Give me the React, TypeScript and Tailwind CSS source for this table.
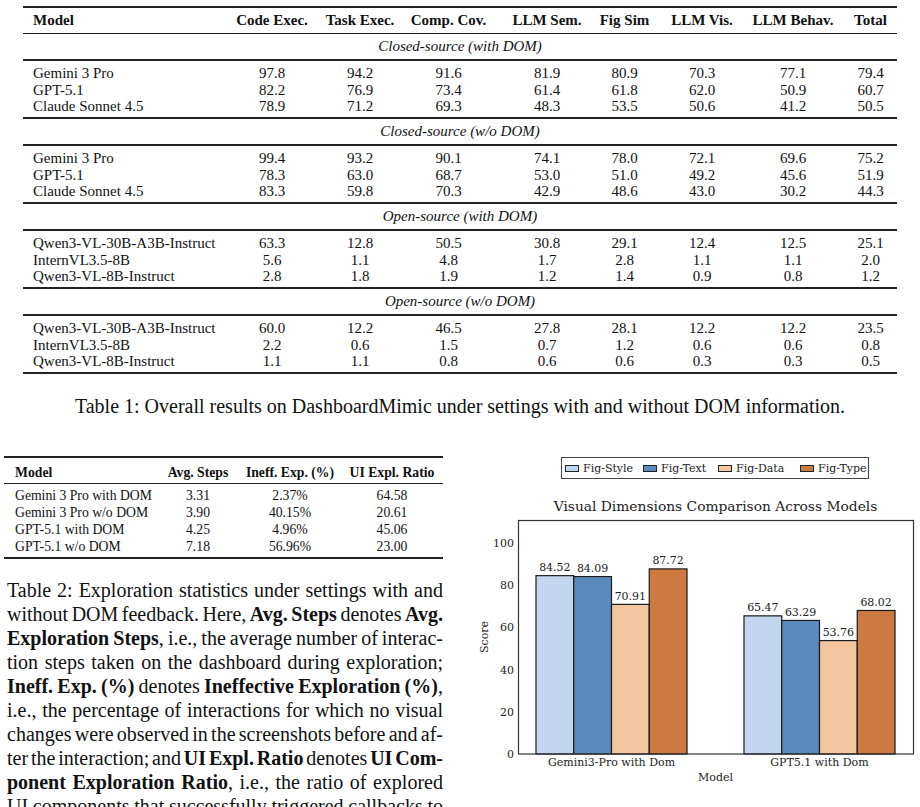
import React from "react";

type Row = { model: string; vals: string[] };
type Section = { label: string; rows: Row[] };

const T1_HEAD = ["Code Exec.", "Task Exec.", "Comp. Cov.", "LLM Sem.", "Fig Sim", "LLM Vis.", "LLM Behav.", "Total"];

const T1: Section[] = [
  {
    label: "Closed-source (with DOM)",
    rows: [
      { model: "Gemini 3 Pro", vals: ["97.8", "94.2", "91.6", "81.9", "80.9", "70.3", "77.1", "79.4"] },
      { model: "GPT-5.1", vals: ["82.2", "76.9", "73.4", "61.4", "61.8", "62.0", "50.9", "60.7"] },
      { model: "Claude Sonnet 4.5", vals: ["78.9", "71.2", "69.3", "48.3", "53.5", "50.6", "41.2", "50.5"] },
    ],
  },
  {
    label: "Closed-source (w/o DOM)",
    rows: [
      { model: "Gemini 3 Pro", vals: ["99.4", "93.2", "90.1", "74.1", "78.0", "72.1", "69.6", "75.2"] },
      { model: "GPT-5.1", vals: ["78.3", "63.0", "68.7", "53.0", "51.0", "49.2", "45.6", "51.9"] },
      { model: "Claude Sonnet 4.5", vals: ["83.3", "59.8", "70.3", "42.9", "48.6", "43.0", "30.2", "44.3"] },
    ],
  },
  {
    label: "Open-source (with DOM)",
    rows: [
      { model: "Qwen3-VL-30B-A3B-Instruct", vals: ["63.3", "12.8", "50.5", "30.8", "29.1", "12.4", "12.5", "25.1"] },
      { model: "InternVL3.5-8B", vals: ["5.6", "1.1", "4.8", "1.7", "2.8", "1.1", "1.1", "2.0"] },
      { model: "Qwen3-VL-8B-Instruct", vals: ["2.8", "1.8", "1.9", "1.2", "1.4", "0.9", "0.8", "1.2"] },
    ],
  },
  {
    label: "Open-source (w/o DOM)",
    rows: [
      { model: "Qwen3-VL-30B-A3B-Instruct", vals: ["60.0", "12.2", "46.5", "27.8", "28.1", "12.2", "12.2", "23.5"] },
      { model: "InternVL3.5-8B", vals: ["2.2", "0.6", "1.5", "0.7", "1.2", "0.6", "0.6", "0.8"] },
      { model: "Qwen3-VL-8B-Instruct", vals: ["1.1", "1.1", "0.8", "0.6", "0.6", "0.3", "0.3", "0.5"] },
    ],
  },
];

const T2_HEAD = ["Avg. Steps", "Ineff. Exp. (%)", "UI Expl. Ratio"];
const T2: Row[] = [
  { model: "Gemini 3 Pro with DOM", vals: ["3.31", "2.37%", "64.58"] },
  { model: "Gemini 3 Pro w/o DOM", vals: ["3.90", "40.15%", "20.61"] },
  { model: "GPT-5.1 with DOM", vals: ["4.25", "4.96%", "45.06"] },
  { model: "GPT-5.1 w/o DOM", vals: ["7.18", "56.96%", "23.00"] },
];

// caption lines as set in the paper, **...** is bold
const CAPTION2 = [
  "Table 2: Exploration statistics under settings with and",
  "without DOM feedback. Here, **Avg. Steps** denotes **Avg.**",
  "**Exploration Steps**, i.e., the average number of interac-",
  "tion steps taken on the dashboard during exploration;",
  "**Ineff. Exp. (%)** denotes **Ineffective Exploration (%)**,",
  "i.e., the percentage of interactions for which no visual",
  "changes were observed in the screenshots before and af-",
  "ter the interaction; and **UI Expl. Ratio** denotes **UI Com-**",
  "**ponent Exploration Ratio**, i.e., the ratio of explored",
  "UI components that successfully triggered callbacks to",
];

const t1Grid = "grid grid-cols-[204px_90px_86px_91px_106px_49px_106px_76px_79px]";
const t2Grid = "grid grid-cols-[150px_88px_96px_108px]";

function parseLine(s: string) {
  let bold = false;
  return s.split(" ").map((w) =>
    w
      .split("**")
      .map((t, i) => {
        if (i > 0) bold = !bold;
        return { t, b: bold };
      })
      .filter((p) => p.t)
  );
}

function Table1() {
  return (
    <div className="ml-[23px] w-[874px] border-t-2 border-[#222] text-[15px] leading-[16.5px]">
      <div className={`${t1Grid} h-[26px] items-center border-b border-[#222] font-bold`}>
        <div className="pl-[10px]">Model</div>
        {T1_HEAD.map((h) => (
          <div key={h} className="flex justify-center whitespace-nowrap">{h}</div>
        ))}
      </div>
      {T1.map((s) => (
        <div key={s.label}>
          <div className="flex h-[27px] items-center justify-center border-b-2 border-[#222] italic">{s.label}</div>
          <div className="border-b-2 border-[#222] pt-[4px] pb-[2.5px]">
            {s.rows.map((r) => (
              <div key={r.model} className={t1Grid}>
                <div className="pl-[10px] whitespace-nowrap">{r.model}</div>
                {r.vals.map((v, i) => (
                  <div key={i} className="flex justify-center whitespace-nowrap">{v}</div>
                ))}
              </div>
            ))}
          </div>
        </div>
      ))}
    </div>
  );
}

function Table2() {
  return (
    <div className="ml-[4px] w-[439px] border-t-2 border-b-2 border-[#222] text-[13.7px] leading-[17px]">
      <div className={`${t2Grid} border-b border-[#222] pt-[6px] pb-[1.5px] font-bold`}>
        <div className="pl-[11px]">Model</div>
        {T2_HEAD.map((h) => (
          <div key={h} className="flex justify-center whitespace-nowrap">{h}</div>
        ))}
      </div>
      <div className="pt-[3px] pb-[1.5px] leading-[17.3px]">
        {T2.map((r) => (
          <div key={r.model} className={t2Grid}>
            <div className="pl-[11px] whitespace-nowrap">{r.model}</div>
            {r.vals.map((v, i) => (
              <div key={i} className="flex justify-center whitespace-nowrap">{v}</div>
            ))}
          </div>
        ))}
      </div>
    </div>
  );
}

function Caption2() {
  return (
    <div className="mt-[19px] ml-[7px] w-[436px] text-[20px] leading-[24px]">
      {CAPTION2.map((line, li) => (
        <div key={li} className="flex justify-between">
          {parseLine(line).map((w, wi) => (
            <span key={wi} className="whitespace-nowrap">
              {w.map((p, pi) => (p.b ? <b key={pi}>{p.t}</b> : <React.Fragment key={pi}>{p.t}</React.Fragment>))}
            </span>
          ))}
        </div>
      ))}
    </div>
  );
}

const COLORS = ["#c2d7ef", "#5a8bbf", "#f3c6a0", "#cc7a3f"];
const LEGEND = ["Fig-Style", "Fig-Text", "Fig-Data", "Fig-Type"];
const GROUPS = [
  { name: "Gemini3-Pro with Dom", x: 76, vals: [84.52, 84.09, 70.91, 87.72] },
  { name: "GPT5.1 with Dom", x: 284, vals: [65.47, 63.29, 53.76, 68.02] },
];

function Chart() {
  const y0 = 304;
  const k = 2.11;
  const bw = 37.75;
  const font = "DejaVu Serif, serif";
  return (
    <svg width={460} height={357} viewBox="0 0 460 357" fontFamily={font} fill="#222">
      {/* legend */}
      <rect x={101.5} y={7.5} width={307} height={21} fill="#fff" stroke="#444" strokeWidth={1} />
      {LEGEND.map((l, i) => {
        const px = [105, 183, 258, 340][i];
        return (
          <g key={l}>
            <rect x={px + 0.5} y={15.5} width={13} height={6} fill={COLORS[i]} stroke="#222" strokeWidth={1} />
            <text x={px + 18} y={22} fontSize={11}>{l}</text>
          </g>
        );
      })}
      {/* title */}
      <text x={255.5} y={61} fontSize={13.8} textAnchor="middle">
        Visual Dimensions Comparison Across Models
      </text>
      {/* bars */}
      {GROUPS.map((g) =>
        g.vals.map((v, i) => {
          const x = g.x + i * bw;
          const h = v * k;
          return (
            <g key={g.name + i}>
              <rect x={x} y={y0 - h} width={bw} height={h} fill={COLORS[i]} stroke="#1a1a1a" strokeWidth={1.2} />
              <text x={x + bw / 2} y={y0 - h - 4.5} fontSize={11} textAnchor="middle">
                {v.toFixed(2)}
              </text>
            </g>
          );
        })
      )}
      {/* axes */}
      <rect x={58.5} y={70.5} width={395} height={233.5} fill="none" stroke="#333" strokeWidth={1.2} />
      {[0, 20, 40, 60, 80, 100].map((t) => (
        <text key={t} x={54} y={y0 - t * k + 4} fontSize={11} textAnchor="end">
          {t}
        </text>
      ))}
      {GROUPS.map((g) => (
        <text key={g.name} x={g.x + bw * 2} y={316} fontSize={11} textAnchor="middle">
          {g.name}
        </text>
      ))}
      <text x={255.5} y={331} fontSize={11} textAnchor="middle">Model</text>
      <text x={28} y={187} fontSize={11} textAnchor="middle" transform="rotate(-90 28 187)">
        Score
      </text>
    </svg>
  );
}

export default function App() {
  return (
    <div className="w-[920px] min-h-[807px] overflow-hidden bg-white pt-[6px] font-['Liberation_Serif','Times_New_Roman',serif] text-[#111]">
      <Table1 />
      <div className="mt-[21px] text-center text-[20px] leading-[23px]">
        Table 1: Overall results on DashboardMimic under settings with and without DOM information.
      </div>
      <div className="mt-[32px] grid grid-cols-[460px_460px]">
        <div className="pt-[6px]">
          <Table2 />
          <Caption2 />
        </div>
        <Chart />
      </div>
    </div>
  );
}
